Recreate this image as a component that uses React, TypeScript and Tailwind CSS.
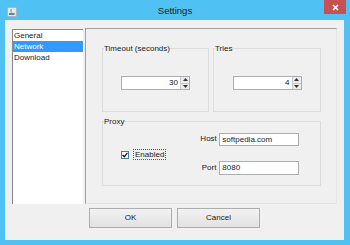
import React from "react";

const font = { fontFamily: '"Liberation Sans", Arial, sans-serif' };

function Spinner({ value }: { value: string }) {
  return (
    <div className="flex h-[14px] w-[69px] border border-[#abadb3] bg-white">
      <div className="flex-1 pr-[2px] text-right leading-[12px]">{value}</div>
      <div className="flex w-[9px] flex-col border-l border-[#c9c9c9] bg-[#ececec]">
        <div className="flex flex-1 items-center justify-center border-b border-[#c9c9c9]">
          <svg width="5" height="3" viewBox="0 0 5 3">
            <path d="M2.5 0L5 3H0z" fill="#333" />
          </svg>
        </div>
        <div className="flex flex-1 items-center justify-center">
          <svg width="5" height="3" viewBox="0 0 5 3">
            <path d="M0 0H5L2.5 3z" fill="#333" />
          </svg>
        </div>
      </div>
    </div>
  );
}

function Group({
  title,
  className,
  children,
}: {
  title: string;
  className: string;
  children: React.ReactNode;
}) {
  return (
    <fieldset className={`border border-[#dcdcdc] ${className}`}>
      <legend className="ml-[1px] px-0 leading-[9px]">{title}</legend>
      {children}
    </fieldset>
  );
}

export default function App() {
  return (
    <div
      className="flex h-[245px] w-[350px] flex-col bg-[#4fc1f3] text-[8px] text-[#1a1a1a]"
      style={font}
    >
      {/* Title bar */}
      <div className="relative flex h-[20px] shrink-0 items-center justify-center">
        <div className="absolute left-[7px] top-[7px] flex h-[10px] w-[10px] items-center justify-center rounded-[1px] border border-[#9fb7c6] bg-[#dfe8ee]">
          <svg width="8" height="8" viewBox="0 0 8 8">
            <path d="M3 1C4 2 2 3 3.5 4.5" stroke="#e8641c" strokeWidth="1" fill="none" />
            <path d="M1 5h5v2H1z" fill="#6a7f9a" />
            <path d="M6 5.5h1.2v1H6z" fill="#6a7f9a" />
          </svg>
        </div>
        <span className="mt-[2px] text-[9.5px] text-[#222]">Settings</span>
        <div className="absolute right-[4px] top-0 flex h-[14px] w-[22px] items-center justify-center bg-[#c75050]">
          <svg width="7" height="7" viewBox="0 0 7 7">
            <path d="M1 1L6 6M6 1L1 6" stroke="white" strokeWidth="1.6" />
          </svg>
        </div>
      </div>

      {/* Content */}
      <div className="mb-[5px] ml-[5px] mr-[6px] flex flex-1 flex-col bg-[#f0f0f0]">
        <div className="flex pl-[7px] pt-[8px]">
          {/* Left list */}
          <div className="mt-[1px] h-[175px] w-[71px] border-l border-t border-[#828790] bg-white leading-[11px]">
            <div className="pl-[1px]">General</div>
            <div className="bg-[#3399ff] pl-[1px] text-white">Network</div>
            <div className="pl-[1px]">Download</div>
          </div>

          {/* Panel */}
          <div className="ml-[2px] h-[176px] w-[252px] border border-b-[#e4e4e4] border-l-[#a0a0a0] border-r-[#e4e4e4] border-t-[#a0a0a0] pl-[16px] pt-[15px]">
            <div className="flex gap-[4px]">
              <Group title="Timeout (seconds)" className="h-[68px] w-[107px]">
                <div className="flex h-full items-center justify-center pt-[2px]">
                  <Spinner value="30" />
                </div>
              </Group>
              <Group title="Tries" className="h-[68px] w-[108px]">
                <div className="flex h-full items-center justify-center pt-[2px]">
                  <Spinner value="4" />
                </div>
              </Group>
            </div>

            <Group title="Proxy" className="mt-[5px] h-[69px] w-[219px]">
              <div className="flex h-full items-center pb-[4px] pl-[18px]">
                <div className="flex items-center gap-[4px] pt-[2px]">
                  <div className="flex h-[8px] w-[8px] items-center justify-center border border-[#3c7fb1] bg-white">
                    <svg width="6" height="6" viewBox="0 0 6 6">
                      <path d="M0.6 3L2.3 4.8L5.4 0.8" stroke="#111" strokeWidth="1.3" fill="none" />
                    </svg>
                  </div>
                  <span className="border border-dotted border-[#555] px-[1px] leading-[9px]">Enabled</span>
                </div>
                <div className="ml-[34px] grid grid-cols-[16px_80px] items-center gap-x-[3px] gap-y-[15px]">
                  <span className="text-right">Host</span>
                  <div className="h-[13px] border border-[#abadb3] bg-white pl-[2px] leading-[11px]">
                    softpedia.com
                  </div>
                  <span className="text-right">Port</span>
                  <div className="h-[14px] border border-[#abadb3] bg-white pl-[2px] leading-[12px]">
                    8080
                  </div>
                </div>
              </div>
            </Group>
          </div>
        </div>

        {/* Buttons */}
        <div className="mt-[4px] flex justify-center gap-[5px]">
          <button className="h-[20px] w-[83px] border border-[#adadad] bg-gradient-to-b from-[#f2f2f2] to-[#e2e2e2] text-[8px]">
            OK
          </button>
          <button className="h-[20px] w-[83px] border border-[#adadad] bg-gradient-to-b from-[#f2f2f2] to-[#e2e2e2] text-[8px]">
            Cancel
          </button>
        </div>
      </div>
    </div>
  );
}
